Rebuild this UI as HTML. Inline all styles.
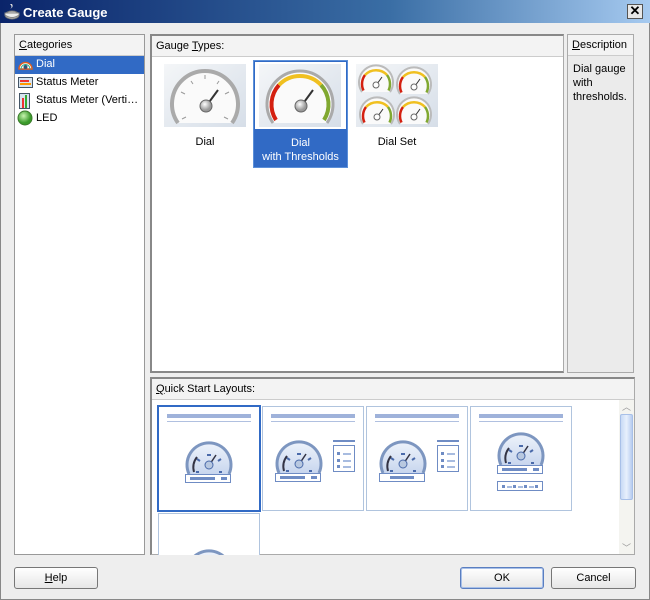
<!DOCTYPE html>
<html><head><style>
*{box-sizing:border-box;margin:0;padding:0}
body{width:650px;height:600px;background:#ece9d8;font-family:"Liberation Sans",sans-serif;font-size:11px;color:#000;position:relative;overflow:hidden}
.abs{position:absolute}
#win{left:0;top:0;width:650px;height:600px;background:#eeeeee;border:1px solid #888;border-top:none}
#title{left:0;top:0;width:650px;height:23px;background:linear-gradient(90deg,#0a246a 0%,#3a6ea5 60%,#a6caf0 100%);color:#fff;font-weight:bold;font-size:13px;padding:5px 0 0 23px}
#close{left:627px;top:4px;width:16px;height:15px;background:#e8e8e8;border:1px solid #555;font-size:13px;line-height:12px;text-align:center;color:#000;font-weight:bold}
.panel{background:#fff;border:1px solid #aaa}
.hdr{background:#f3f3f3;border-bottom:1px solid #ccc;height:21px;padding:4px 0 0 4px}
.row{height:18px;padding:2px 0 0 21px;position:relative}
.btn{border:1px solid #777;border-radius:3px;background:linear-gradient(#fff,#e6e6e6);text-align:center;padding-top:4px;height:22px}
.tile{border:1px solid #b0c4de;background:#fff}
</style></head><body>
<div id="win" class="abs"></div>
<div id="title" class="abs">Create Gauge</div>
<svg class="abs" style="left:4px;top:3px" width="16" height="17"><path d="M6 1q3 3 0 5q4-2 2-5z" fill="#ddd"/><ellipse cx="8" cy="12" rx="7" ry="4" fill="#ccc" stroke="#777"/><path d="M1 10h14v2q-7 5-14 0z" fill="#eee" stroke="#888"/></svg>
<div id="close" class="abs">✕</div>

<div class="abs panel" style="left:14px;top:34px;width:131px;height:521px;border-color:#999">
 <div class="hdr" style="height:21px"><u>C</u>ategories</div>
 <div class="row" style="background:#316ac5;color:#fff">Dial<svg class="abs" style="left:3px;top:2px" width="15" height="13"><path d="M1 11a6.5 6.5 0 0 1 13 0z" fill="#fff" stroke="#e06020" stroke-width="1.5"/><path d="M3 11a4.5 4.5 0 0 1 9 0" fill="none" stroke="#2a8"/><circle cx="7.5" cy="9" r="2" fill="#357"/></svg></div>
 <div class="row">Status Meter<svg class="abs" style="left:3px;top:3px" width="15" height="12"><rect x=".5" y=".5" width="14" height="10" fill="#d7e4f0" stroke="#456"/><rect x="2" y="3" width="9" height="2" fill="#e33"/><rect x="2" y="6" width="11" height="2" fill="#f90"/></svg></div>
 <div class="row">Status Meter (Verti…<svg class="abs" style="left:4px;top:1px" width="12" height="16"><rect x=".5" y=".5" width="10" height="15" fill="#d7e4f0" stroke="#456"/><rect x="3" y="5" width="2" height="10" fill="#e33"/><rect x="6" y="2" width="2" height="13" fill="#3a3"/></svg></div>
 <div class="row">LED<svg class="abs" style="left:2px;top:0px" width="16" height="16"><defs><radialGradient id="g1" cx=".4" cy=".35"><stop offset="0" stop-color="#c8f5b0"/><stop offset="1" stop-color="#3a9a2a"/></radialGradient></defs><circle cx="8" cy="8" r="7" fill="url(#g1)" stroke="#3a7a2a"/></svg></div>
</div>

<div class="abs" style="left:150px;top:34px;width:414px;height:339px;border:2px solid #888;border-right:1px solid #aaa;background:#fff">
 <div class="hdr">Gauge <u>T</u>ypes:</div>
</div>
<svg width="0" height="0" style="position:absolute">
 <defs>
  <linearGradient id="bg" x1="0" y1="0" x2="1" y2="1"><stop offset="0" stop-color="#f4f6f8"/><stop offset="1" stop-color="#d6dee8"/></linearGradient>
  <radialGradient id="hub" cx=".4" cy=".35"><stop offset="0" stop-color="#fff"/><stop offset="1" stop-color="#999"/></radialGradient>
 </defs>
</svg>
<svg class="abs" style="left:164px;top:64px" width="82" height="63"><rect width="82" height="63" fill="url(#bg)"/><path d="M14 59A33 33 0 1 1 68 59z" fill="#fafafa"/><path d="M14 59A33 33 0 1 1 68 59" fill="none" stroke="#aaa" stroke-width="4"/><path d="M18 55l4-2M17 28l4 2M41 11v4M65 28l-4 2M64 55l-4-2M27 17l2 3M55 17l-2 3" stroke="#999"/><path d="M43 41l11-15" stroke="#333" stroke-width="2"/><circle cx="42" cy="42" r="6" fill="url(#hub)" stroke="#666"/></svg>
<div class="abs" style="left:164px;top:136px;width:82px;text-align:center">Dial</div>

<div class="abs" style="left:253px;top:60px;width:95px;height:108px;background:#316ac5;border:1px solid #5b8fd9"></div>
<div class="abs" style="left:255px;top:62px;width:91px;height:67px;background:#fff"></div>
<svg class="abs" style="left:259px;top:64px" width="82" height="63"><rect width="82" height="63" fill="url(#bg)"/><path d="M14 59A33 33 0 1 1 68 59z" fill="#fafafa"/><path d="M14 59A33 33 0 1 1 68 59" fill="none" stroke="#aaa" stroke-width="3"/><path d="M17 56A29 29 0 0 1 20 21" fill="none" stroke="#d42010" stroke-width="4"/><path d="M20 21A29 29 0 0 1 62 21" fill="none" stroke="#f0c020" stroke-width="4"/><path d="M62 21A29 29 0 0 1 65 56" fill="none" stroke="#80a830" stroke-width="4"/><path d="M43 41l11-15" stroke="#333" stroke-width="2"/><circle cx="42" cy="42" r="6" fill="url(#hub)" stroke="#666"/></svg>
<div class="abs" style="left:253px;top:136px;width:95px;text-align:center;color:#fff;line-height:14px">Dial<br>with Thresholds</div>

<svg class="abs" style="left:356px;top:64px" width="82" height="63"><rect width="82" height="63" fill="url(#bg)"/>
 <g id="mg"><path d="M6 28A17 17 0 1 1 34 28z" fill="#fafafa"/><path d="M6 28A17 17 0 1 1 34 28" fill="none" stroke="#bbb" stroke-width="2"/><path d="M7.5 26.5A15 15 0 0 1 9 11" fill="none" stroke="#d42010" stroke-width="2.5"/><path d="M9 11A15 15 0 0 1 31 11" fill="none" stroke="#f0c020" stroke-width="2.5"/><path d="M31 11A15 15 0 0 1 32.5 26.5" fill="none" stroke="#80a830" stroke-width="2.5"/><path d="M21 20l5-7" stroke="#333"/><circle cx="20" cy="21" r="3" fill="#fff" stroke="#666"/></g>
 <use href="#mg" x="38" y="2"/><use href="#mg" x="1" y="32"/><use href="#mg" x="38" y="32"/></svg>
<div class="abs" style="left:356px;top:136px;width:82px;text-align:center">Dial Set</div>

<div class="abs" style="left:567px;top:34px;width:67px;height:339px;background:#ebebeb;border:1px solid #aaa">
 <div class="hdr" style="padding-left:4px"><u>D</u>escription</div>
 <div style="padding:6px 0 0 5px;line-height:14px">Dial gauge with thresholds.</div>
</div>

<div class="abs" style="left:150px;top:377px;width:485px;height:178px;border:2px solid #888;border-right:1px solid #aaa;border-bottom:1px solid #aaa;background:#fff">
 <div class="hdr"><u>Q</u>uick Start Layouts:</div>
</div>
<svg width="0" height="0" style="position:absolute"><defs>
 <linearGradient id="lgb" x1="0" y1="0" x2="0" y2="1"><stop offset="0" stop-color="#eef3fb"/><stop offset="1" stop-color="#c8d6ee"/></linearGradient>
 <g id="lg"><path d="M4 30A22 22 0 1 1 44 30z" fill="url(#lgb)"/><path d="M4 30A22 22 0 1 1 44 30" fill="none" stroke="#7d96c0" stroke-width="3"/><path d="M9 28A17 17 0 0 1 12 13" fill="none" stroke="#334" stroke-width="2"/><path d="M11 28h3M12 15l3 2M22 11h4M36 15l-3 2M37 28h-3" stroke="#4a6aaa" stroke-width="2"/><path d="M25 20l6-9" stroke="#334" stroke-width="1.5"/><circle cx="24" cy="21" r="4" fill="#b8c8e0" stroke="#4a6aaa"/></g>
</defs></svg>
<div class="abs tile" style="left:157px;top:405px;width:104px;height:107px;border:2px solid #316ac5"></div>
<div class="abs tile" style="left:262px;top:406px;width:102px;height:105px"></div>
<div class="abs tile" style="left:366px;top:406px;width:102px;height:105px"></div>
<div class="abs tile" style="left:470px;top:406px;width:102px;height:105px"></div>
<div class="abs tile" style="left:158px;top:513px;width:102px;height:42px;border-bottom:none"></div>
<svg class="abs" style="left:157px;top:405px" width="420" height="150">
 <g fill="#9fb2da"><rect x="10" y="9" width="84" height="4"/><rect x="114" y="9" width="84" height="4"/><rect x="218" y="9" width="84" height="4"/><rect x="322" y="9" width="84" height="4"/></g>
 <g stroke="#b0c0e0"><path d="M10 16.5h84M114 16.5h84M218 16.5h84M322 16.5h84"/></g>
 <use href="#lg" x="28" y="39"/><use href="#lg" x="118" y="38"/><use href="#lg" x="222" y="38"/><use href="#lg" x="340" y="30"/><use href="#lg" x="28" y="147"/>
 <g fill="#fff" stroke="#6f8cc4"><rect x="28.5" y="69.5" width="45" height="8"/><rect x="118.5" y="68.5" width="45" height="8"/><rect x="222.5" y="68.5" width="45" height="8"/><rect x="340.5" y="60.5" width="45" height="8"/><rect x="340.5" y="76.5" width="45" height="9"/><rect x="176.5" y="40.5" width="21" height="26"/><rect x="280.5" y="40.5" width="21" height="26"/></g>
 <g fill="#6f8cc4"><rect x="33" y="72" width="25" height="3"/><rect x="64" y="72" width="6" height="3"/><rect x="123" y="71" width="25" height="3"/><rect x="154" y="71" width="6" height="3"/><rect x="233" y="71" width="24" height="3"/><rect x="345" y="63" width="25" height="3"/><rect x="376" y="63" width="6" height="3"/><rect x="176" y="35" width="22" height="2"/><rect x="280" y="35" width="22" height="2"/>
 <rect x="180" y="47" width="3" height="3"/><rect x="180" y="54" width="3" height="3"/><rect x="180" y="60" width="3" height="3"/><rect x="284" y="47" width="3" height="3"/><rect x="284" y="54" width="3" height="3"/><rect x="284" y="60" width="3" height="3"/>
 <rect x="345" y="80" width="3" height="3"/><rect x="356" y="80" width="3" height="3"/><rect x="367" y="80" width="3" height="3"/><rect x="378" y="80" width="3" height="3"/></g>
 <g fill="#a8bce0"><rect x="186" y="48" width="8" height="2"/><rect x="186" y="55" width="8" height="2"/><rect x="186" y="61" width="8" height="2"/><rect x="290" y="48" width="8" height="2"/><rect x="290" y="55" width="8" height="2"/><rect x="290" y="61" width="8" height="2"/><rect x="350" y="81" width="5" height="2"/><rect x="361" y="81" width="5" height="2"/><rect x="372" y="81" width="5" height="2"/></g>
</svg>
<div class="abs" style="left:619px;top:400px;width:15px;height:154px;background:#f4f4f0">
 <div style="height:14px;text-align:center;color:#999;font-size:9px">︿</div>
 <div style="margin:0 1px;height:86px;background:linear-gradient(90deg,#c8daf5,#e8f0fc,#b8cdf0);border:1px solid #a8c0e8;border-radius:2px"></div>
 <div style="position:absolute;bottom:0;width:15px;text-align:center;color:#999;font-size:9px">﹀</div>
</div>

<div class="abs btn" style="left:14px;top:567px;width:84px"><u>H</u>elp</div>
<div class="abs btn" style="left:460px;top:567px;width:84px;border-color:#5a7ec0;box-shadow:inset 0 0 0 1px #a8c0e8">OK</div>
<div class="abs btn" style="left:551px;top:567px;width:85px">Cancel</div>
</body></html>
